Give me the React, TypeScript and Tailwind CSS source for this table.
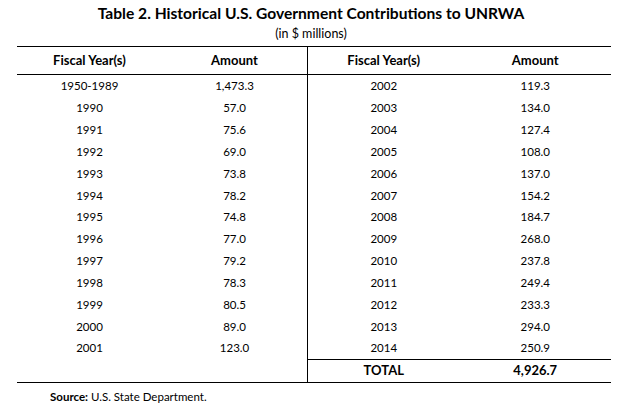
import React from 'react';

const left = [
  ['1950-1989', '1,473.3'],
  ['1990', '57.0'],
  ['1991', '75.6'],
  ['1992', '69.0'],
  ['1993', '73.8'],
  ['1994', '78.2'],
  ['1995', '74.8'],
  ['1996', '77.0'],
  ['1997', '79.2'],
  ['1998', '78.3'],
  ['1999', '80.5'],
  ['2000', '89.0'],
  ['2001', '123.0'],
];

const right = [
  ['2002', '119.3'],
  ['2003', '134.0'],
  ['2004', '127.4'],
  ['2005', '108.0'],
  ['2006', '137.0'],
  ['2007', '154.2'],
  ['2008', '184.7'],
  ['2009', '268.0'],
  ['2010', '237.8'],
  ['2011', '249.4'],
  ['2012', '233.3'],
  ['2013', '294.0'],
  ['2014', '250.9'],
];

const Half: React.FC<{ rows: string[][]; total?: boolean; className?: string }> = ({ rows, total, className }) => (
  <div className={`flex flex-col ${className ?? ''}`}>
    <div className="grid grid-cols-2 h-[28px] items-center border-b border-black font-bold text-[13px]">
      <div className="text-center">Fiscal Year(s)</div>
      <div className="text-center">Amount</div>
    </div>
    {rows.map(([year, amount]) => (
      <div key={year} className="grid grid-cols-2 h-[21.85px] items-center text-[11.5px]">
        <div className="text-center">{year}</div>
        <div className="text-center">{amount}</div>
      </div>
    ))}
    {total && (
      <div className="grid grid-cols-2 h-[23px] items-center border-t border-black font-bold text-[13px]">
        <div className="text-center">TOTAL</div>
        <div className="text-center">4,926.7</div>
      </div>
    )}
  </div>
);

export default function App() {
  return (
    <div className="w-[622px] h-[404px] bg-white text-black overflow-hidden font-['Lato',_sans-serif]">
      <div className="pt-[4px] text-center font-bold text-[15.6px] leading-[19px]">
        Table 2. Historical U.S. Government Contributions to UNRWA
      </div>
      <div className="mt-[3px] text-center text-[12.5px] leading-[16px]">(in $ millions)</div>

      {/* two side-by-side halves share one ruled box */}
      <div className="mt-[4px] ml-[17px] w-[594px] flex border-t border-b border-black">
        <Half rows={left} className="w-[290px]" />
        <Half rows={right} total className="flex-1 border-l border-black" />
      </div>

      <div className="mt-[7px] pl-[50px] text-[11.5px] leading-[14px]">
        <span className="font-bold">Source:</span> U.S. State Department.
      </div>
    </div>
  );
}
